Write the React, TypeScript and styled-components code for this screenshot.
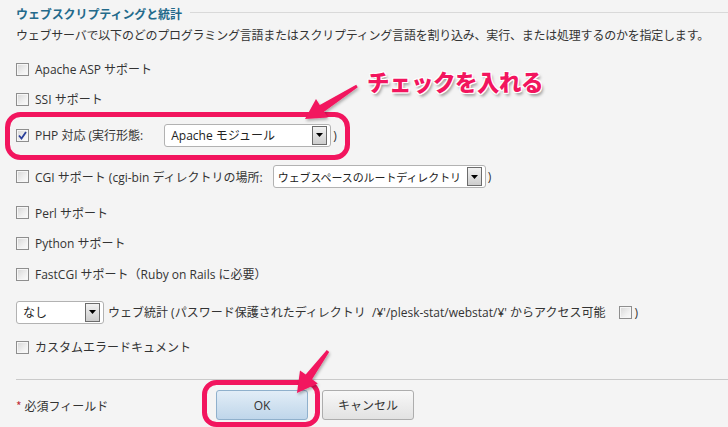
import React from "react";
import styled, { createGlobalStyle } from "styled-components";

const Global = createGlobalStyle`
  html, body { margin: 0; padding: 0; background: #f4f4f4; }
  body { font-family: "Open Sans", "Noto Sans CJK JP", sans-serif; font-size: 12px; color: #333; }
`;

const Page = styled.div`
  position: relative;
  width: 728px;
  height: 427px;
  overflow: hidden;
  background: #f4f4f4;
`;

const Content = styled.div`
  display: flex;
  flex-direction: column;
  padding-left: 16px;
`;

const TitleRow = styled.div`
  height: 26px;
  display: flex;
  align-items: center;
  gap: 8px;
`;

const Title = styled.h2`
  margin: 0;
  font-family: "Noto Sans CJK JP", sans-serif;
  font-size: 12px;
  font-weight: 700;
  color: #236a8b;
  letter-spacing: -0.1px;
`;

const TitleLine = styled.div`
  flex: 1;
  height: 1px;
  background: #d9d9d9;
  margin-top: -1px;
`;

const Desc = styled.p`
  margin: 0;
  height: 18px;
  line-height: 18px;
  font-family: "Noto Sans CJK JP", sans-serif;
  font-size: 12px;
  letter-spacing: -0.22px;
  color: #333;
  white-space: nowrap;
`;

const Row = styled.div<{ $h: number }>`
  height: ${(p) => p.$h}px;
  display: flex;
  align-items: center;
  white-space: nowrap;
`;

const Spacer = styled.div<{ $h: number }>`
  height: ${(p) => p.$h}px;
`;

const Label = styled.span<{ $ml?: number }>`
  margin-left: ${(p) => p.$ml ?? 6}px;
  font-size: 12px;
  color: #333;
`;

const BoxWrap = styled.span<{ $ml?: number }>`
  display: inline-flex;
  align-items: center;
  justify-content: center;
  width: 11px;
  height: 11px;
  margin-left: ${(p) => p.$ml ?? 0}px;
  border: 1px solid #8e8e8e;
  background: linear-gradient(135deg, #d6d6d6 0%, #f0f0f0 60%, #fcfcfc 100%);
  box-shadow: inset 0 0 0 1px #f6f6f6;
  flex: none;
`;

const CheckBox: React.FC<{ checked?: boolean; ml?: number }> = ({ checked, ml }) => (
  <BoxWrap $ml={ml}>
    {checked && (
      <svg width="9" height="9" viewBox="0 0 9 9">
        <path d="M1 4.5 L3.5 7.5 L8 1" fill="none" stroke="#2a3f9a" strokeWidth="1.8" />
      </svg>
    )}
  </BoxWrap>
);

const SelectBox = styled.div<{ $w: number; $ml: number; $pl: number }>`
  width: ${(p) => p.$w}px;
  height: 21px;
  border: 1px solid #b2b2b2;
  border-radius: 3px;
  background: #fff;
  display: flex;
  align-items: center;
  justify-content: space-between;
  padding: 0 3px 0 ${(p) => p.$pl}px;
  margin-left: ${(p) => p.$ml}px;
  flex: none;
  overflow: hidden;
`;

const SelectText = styled.span<{ $ls: number; $fs: number }>`
  font-size: ${(p) => p.$fs}px;
  letter-spacing: ${(p) => p.$ls}px;
  color: #222;
  white-space: nowrap;
`;

const DropBtn = styled.span`
  width: 15px;
  height: 19px;
  border: 1px solid #6c6c6c;
  background: linear-gradient(#f2f2f2, #cdcdcd);
  display: inline-flex;
  align-items: center;
  justify-content: center;
  box-sizing: border-box;
  flex: none;
  margin-left: 2px;
`;

const Select: React.FC<{ w: number; text: string; ml: number; ls?: number; fs?: number; pl?: number }> = ({
  w,
  text,
  ml,
  ls,
  fs,
  pl,
}) => (
  <SelectBox $w={w} $ml={ml} $pl={pl ?? 6}>
    <SelectText $ls={ls ?? 0} $fs={fs ?? 12}>
      {text}
    </SelectText>
    <DropBtn>
      <svg width="7" height="4" viewBox="0 0 7 4">
        <path d="M0 0 H7 L3.5 4 Z" fill="#000" />
      </svg>
    </DropBtn>
  </SelectBox>
);

const Divider = styled.div`
  height: 1px;
  background: #cacaca;
`;

const Footer = styled.div`
  display: flex;
  align-items: center;
  padding-top: 10px;
  height: 30px;
`;

const Required = styled.span`
  width: 200px;
  font-family: "Noto Sans CJK JP", sans-serif;
  font-size: 12px;
  color: #333;
  & > b {
    color: #c0303a;
    font-weight: normal;
    margin-right: 3px;
  }
`;

const Button = styled.button<{ $primary?: boolean }>`
  width: 92px;
  height: 30px;
  border-radius: 3px;
  border: 1px solid ${(p) => (p.$primary ? "#8fb0cc" : "#adadad")};
  background: ${(p) =>
    p.$primary ? "linear-gradient(#e2edf7, #bfd6ea)" : "linear-gradient(#f8f8f8, #e2e2e2)"};
  font-family: "Open Sans", "Noto Sans CJK JP", sans-serif;
  font-size: 12px;
  color: #333;
  margin-right: 14px;
  padding: 0;
`;

const Overlay = styled.svg`
  position: absolute;
  left: 0;
  top: 0;
  pointer-events: none;
`;

const Callout = styled.div`
  position: absolute;
  left: 367px;
  top: 65px;
  font-family: "Noto Sans CJK JP", sans-serif;
  font-weight: 900;
  font-size: 22.5px;
  letter-spacing: -0.5px;
  color: #f2155e;
  text-shadow: -1px -1px 0 #fff, 1px -1px 0 #fff, -1px 1px 0 #fff, 1px 1px 0 #fff,
    0 -1px 0 #fff, 0 1px 0 #fff, 2px 3px 3px rgba(0, 0, 0, 0.35);
  pointer-events: none;
`;

const Paren = styled.span`
  margin-left: 2px;
`;

export default function App() {
  return (
    <Page>
      <Global />
      <Content>
        <TitleRow>
          <Title>ウェブスクリプティングと統計</Title>
          <TitleLine />
        </TitleRow>
        <Desc>
          ウェブサーバで以下のどのプログラミング言語またはスクリプティング言語を割り込み、実行、または処理するのかを指定します。
        </Desc>
        <Spacer $h={10} />
        <Row $h={30}>
          <CheckBox />
          <Label>Apache ASP サポート</Label>
        </Row>
        <Row $h={30}>
          <CheckBox />
          <Label>SSI サポート</Label>
        </Row>
        <Row $h={42}>
          <CheckBox checked />
          <Label>PHP 対応 (実行形態:</Label>
          <Select ml={21} w={156} text="Apache モジュール" />
          <Paren>)</Paren>
        </Row>
        <Row $h={41}>
          <CheckBox />
          <Label>CGI サポート (cgi-bin ディレクトリの場所:</Label>
          <Select ml={10} w={204} pl={4} fs={11} ls={-0.1} text="ウェブスペースのルートディレクトリ" />
          <Paren>)</Paren>
        </Row>
        <Row $h={31}>
          <CheckBox />
          <Label>Perl サポート</Label>
        </Row>
        <Row $h={30}>
          <CheckBox />
          <Label>Python サポート</Label>
        </Row>
        <Row $h={32}>
          <CheckBox />
          <Label>FastCGI サポート（Ruby on Rails に必要）</Label>
        </Row>
        <Row $h={44}>
          <Select ml={0} w={77} text="なし" />
          <Label $ml={4}>
            ウェブ統計 (パスワード保護されたディレクトリ &nbsp;/¥'/plesk-stat/webstat/¥' からアクセス可能
          </Label>
          <CheckBox ml={14} />
          <Paren>)</Paren>
        </Row>
        <Row $h={26}>
          <CheckBox />
          <Label>カスタムエラードキュメント</Label>
        </Row>
        <Spacer $h={19} />
        <Divider />
        <Footer>
          <Required>
            <b>*</b>必須フィールド
          </Required>
          <Button $primary>OK</Button>
          <Button>キャンセル</Button>
        </Footer>
      </Content>

      <Overlay width="728" height="427" viewBox="0 0 728 427">
        <defs>
          <filter id="sh" x="-20%" y="-20%" width="140%" height="140%">
            <feDropShadow dx="1" dy="2" stdDeviation="1.5" floodColor="#000" floodOpacity="0.3" />
          </filter>
        </defs>
        <rect x="7.5" y="114.5" width="340" height="43" rx="13" fill="none" stroke="#f2155e" strokeWidth="5" />
        <rect x="204.5" y="382.5" width="113" height="42" rx="12" fill="none" stroke="#f2155e" strokeWidth="5" />
        <polygon
          filter="url(#sh)"
          fill="#f2155e"
          points="305,119 327.8,117.6 324,111.7 357.8,87.3 356.2,84.7 319.8,104.9 316,99"
        />
        <polygon
          filter="url(#sh)"
          fill="#f2155e"
          points="297,393 317.8,383.4 312.1,379.3 329.2,351.9 326.8,350.1 305.7,374.5 300,370.4"
        />
      </Overlay>
      <Callout>チェックを入れる</Callout>
    </Page>
  );
}
